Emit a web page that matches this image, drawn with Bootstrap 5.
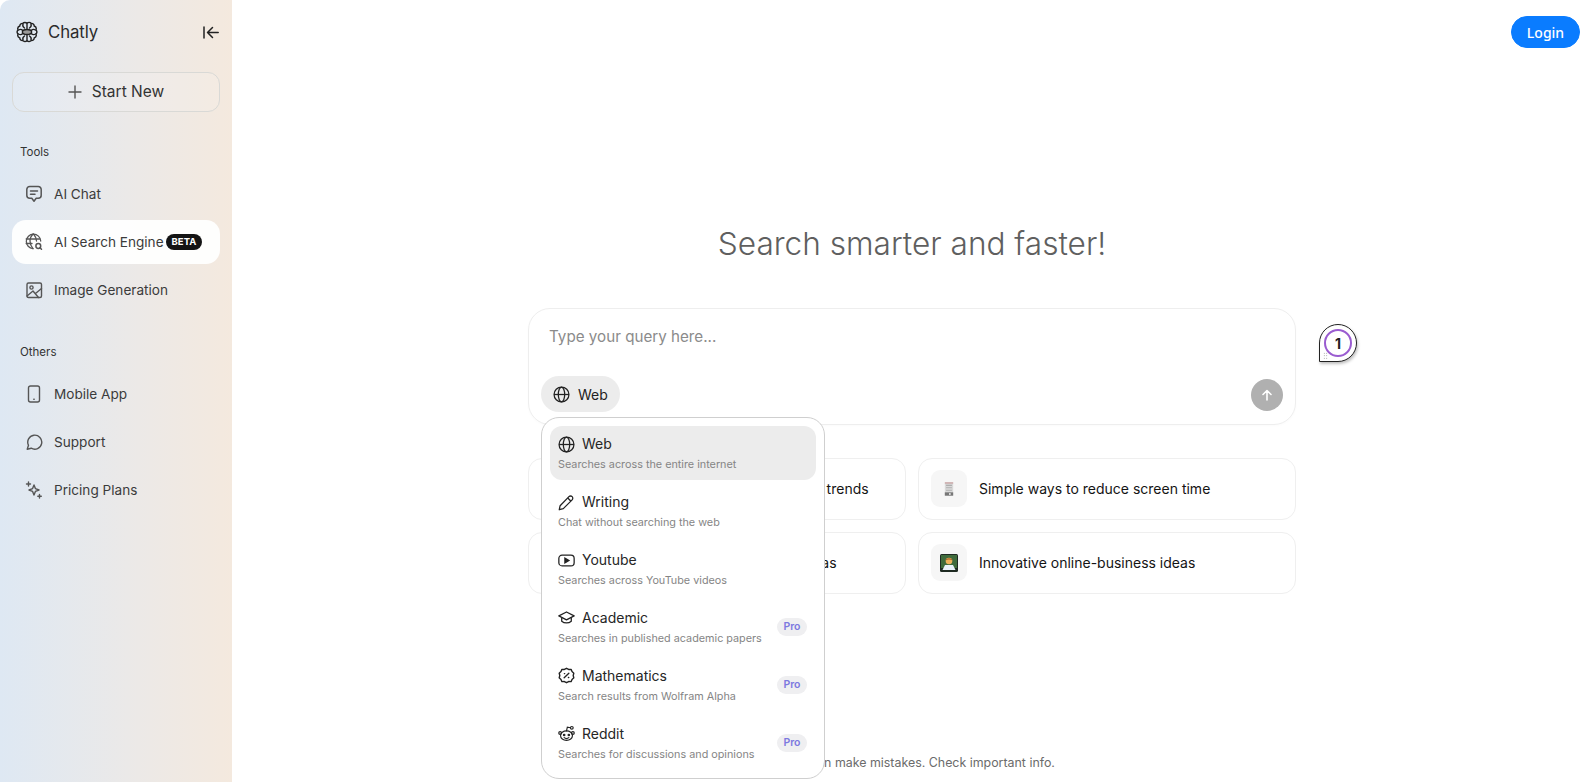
<!DOCTYPE html>
<html lang="en">
<head>
  <meta charset="UTF-8">
  <title>Chatly - AI Search Engine</title>
  <link href="https://cdn.jsdelivr.net/npm/bootstrap@5.3.0/dist/css/bootstrap.min.css" rel="stylesheet">
  <style>
    body {
      font-family: Inter, "Liberation Sans", sans-serif;
      height: 100vh;
      overflow: hidden;
      background: #fff;
      color: #1c1c1c;
    }
    svg { flex-shrink: 0; display: block; }
    .sidebar {
      width: 232px;
      padding: 0 12px;
      background: linear-gradient(90deg, #dee8f3 0%, #ebe9e8 55%, #f4e9de 100%);
      border-top-left-radius: 10px;
    }
    .brand-row { height: 64px; padding: 0 1px 0 4px; margin-bottom: 8px; }
    .brand-group { gap: 10px; }
    .brand { font-size: 16.8px; color: #2b2b2b; letter-spacing: -.1px; padding-top: 1px; }
    .btn-new {
      height: 40px;
      gap: 10px;
      border: 1px solid #d9d9d6;
      border-radius: 12px;
      font-size: 15.5px;
      color: #333;
      background: rgba(255,255,255,.12);
    }
    .side-label { font-size: 11.5px; line-height: 18px; padding-left: 8px; color: #333; }
    .side-label.first { margin: 31px 0 11px; }
    .side-label.next { margin: 27px 0 11px; }
    .sidebar .nav-link {
      height: 44px;
      padding: 0 0 0 13px;
      margin-bottom: 4px;
      border-radius: 14px;
      font-size: 13.6px;
      color: #3b3b3b;
      gap: 11px;
    }
    .sidebar .nav-link.active { background: rgba(255,255,255,.92); color: #3b3b3b; }
    .badge-beta {
      background: #141414;
      font-size: 9.5px;
      font-weight: 700;
      padding: 3.5px 6px;
      margin-left: -6px;
    }
    .btn-login {
      --bs-btn-bg: #0a7cff;
      --bs-btn-hover-bg: #0a7cff;
      --bs-btn-border-color: #0a7cff;
      width: 69px;
      height: 32px;
      padding: 0;
      font-size: 14px;
      font-weight: 500;
      border-radius: 16px;
      font-family: "Noto Sans", sans-serif;
    }
    .top-row { padding: 16px 12px 0 0; }
    .center-col { width: 768px; margin: 176px auto 0; }
    .headline { font-size: 31.6px; line-height: 40px; font-weight: 300; color: #5f5f5f; margin: 0 0 44px; text-align: center; }
    .composer {
      height: 117px;
      border: 1px solid #eeeeee;
      border-radius: 22px;
      padding: 16px 12px 12px 12px;
      box-shadow: 0 1px 3px rgba(0,0,0,.02);
    }
    .composer-hint { font-size: 15.2px; line-height: 24px; color: #8b8b8b; padding-left: 8px; }
    .mode-pill {
      height: 36px;
      padding: 0 12px;
      gap: 8px;
      background: #ececec;
      border-radius: 18px;
      font-size: 14px;
      color: #222;
    }
    .send-btn { width: 32px; height: 32px; padding: 0; background: #b0b0b0; margin-bottom: 1px; }
    .mode-menu {
      display: block;
      left: 12px;
      top: 108px;
      width: 284px;
      height: 362px;
      padding: 8px;
      border: 1px solid #cfcfcf;
      border-radius: 18px;
      z-index: 5;
    }
    .mode-menu .list-group-item {
      height: 54px;
      margin-bottom: 4px;
      padding: 8px;
      border: 0;
      border-radius: 12px;
      background: transparent;
    }
    .mode-menu .list-group-item.active { background: #ececec; }
    .mode-title { font-size: 14px; line-height: 20px; color: #262626; gap: 7px; }
    .mode-desc { font-size: 10.8px; line-height: 16px; color: #858585; margin-top: 3px; white-space: nowrap; }
    .badge-pro {
      background: #efeff1;
      color: #7c79e0;
      font-size: 10.5px;
      font-weight: 600;
      padding: 4px 6.5px;
      margin-right: 1px;
    }
    .suggest-grid { display: grid; grid-template-columns: 378px 378px; gap: 12.5px 12px; margin-top: 33px; }
    .suggest-card {
      height: 61.5px;
      flex-direction: row;
      align-items: center;
      padding: 0 12px;
      gap: 12px;
      border: 1px solid #efefef;
      border-radius: 14px;
      font-size: 14px;
      color: #141414;
      white-space: nowrap;
    }
    .suggest-icon { width: 36px; height: 37px; border-radius: 9px; background: #f6f6f6; }
    .legal { font-size: 12.4px; color: #6b6b6b; padding-bottom: 11px; line-height: 16px; }
    .pin {
      right: -62px;
      top: 15px;
      width: 38px;
      height: 38px;
      background: #fff;
      border: 1px solid #222;
      border-radius: 50% 50% 50% 0;
      box-shadow: 1px 2px 3px rgba(0,0,0,.25);
    }
    .pin-ring {
      width: 28px;
      height: 28px;
      border: 2px solid #9a5cd0;
      border-radius: 50%;
      font-size: 14px;
      font-weight: 700;
      color: #222;
    }
    .pin-grip {
      left: 3px;
      bottom: 2px;
      width: 5px;
      height: 7px;
      background-image: radial-gradient(#888 .6px, transparent .7px);
      background-size: 2.5px 2.5px;
    }
  </style>
</head>
<body class="d-flex">

<!-- Sidebar -->
<aside class="sidebar flex-shrink-0">
  <div class="brand-row d-flex align-items-center justify-content-between">
    <div class="brand-group d-flex align-items-center">
      <svg width="22" height="22" viewBox="0 0 22 22" fill="none" stroke="#222" stroke-width="1.400" stroke-linecap="round">
        <path d="M11 2.200c-1.200-1-3.200-1-4.200.2-1.600-.2-3 1-3 2.600C2.200 5.700 1.400 7.400 2 9c-1.100 1.200-1.100 2.800 0 4-.6 1.600.2 3.300 1.800 4 0 1.600 1.400 2.800 3 2.600 1 1.200 3 1.200 4.200.2 1.200 1 3.200 1 4.200-.2 1.600.2 3-1 3-2.600 1.600-.7 2.400-2.400 1.800-4 1.100-1.200 1.100-2.800 0-4 .6-1.600-.2-3.300-1.800-4 0-1.600-1.400-2.800-3-2.600-1-1.200-3-1.200-4.200-.2z"/>
        <ellipse cx="11" cy="11" rx="4.600" ry="2.500" fill="#9a9a9a"/>
        <path d="M2.500 9c1.500-.8 3-.8 4 .3M19.500 9c-1.500-.8-3-.8-4 .3M2.500 13c1.500.8 3 .8 4-.3M19.500 13c-1.500.8-3 .8-4-.3M7 3c-.5 1.500 0 3 1.500 4M15 3c.5 1.500 0 3-1.500 4M7 19c-.5-1.500 0-3 1.500-4M15 19c.5-1.500 0-3-1.500-4M11 2.500v5.300M11 19.500v-5.300"/>
      </svg>
      <span class="brand">Chatly</span>
    </div>
    <svg width="16" height="13" viewBox="0 0 16 13" fill="none" stroke="#222" stroke-width="1.500" stroke-linecap="round" stroke-linejoin="round">
      <path d="M1 1v11M15.200 6.500H4.500M9.500 1.500l-5 5 5 5"/>
    </svg>
  </div>

  <button class="btn btn-new w-100 d-flex align-items-center justify-content-center">
    <svg width="14" height="14" viewBox="0 0 14 14" fill="none" stroke="#555" stroke-width="1.400" stroke-linecap="round"><path d="M7 1v12M1 7h12"/></svg>
    Start New
  </button>

  <div class="side-label first">Tools</div>
  <nav class="nav flex-column">
    <a class="nav-link d-flex align-items-center" href="#">
      <svg width="18" height="18" viewBox="0 0 18 18" fill="none" stroke="#555" stroke-width="1.500" stroke-linecap="round" stroke-linejoin="round"><path d="M4.800 1.500h8.400a3 3 0 0 1 3 3v5.800a3 3 0 0 1-3 3h-2L9 16.200l-2.200-2.900h-2a3 3 0 0 1-3-3V4.500a3 3 0 0 1 3-3z"/><path d="M5.500 6h7M5.500 9.200h4.500"/></svg>
      AI Chat
    </a>
    <a class="nav-link active d-flex align-items-center" href="#">
      <svg width="18" height="18" viewBox="0 0 18 18" fill="none" stroke="#555" stroke-width="1.300" stroke-linecap="round"><path d="M8 15.600A7.200 7.200 0 1 1 15.700 8"/><path d="M1.200 6h13.600M1.200 10.500H7M8 1c-4 4-4 10 0 14.600M8.500 1c1.800 2 2.800 4.300 3 7"/><circle cx="13.300" cy="13" r="2.400" stroke-width="1.500"/><path d="m15 14.800 1.500 1.500" stroke-width="1.500"/></svg>
      <span class="d-flex align-items-center gap-2 text-nowrap">AI Search Engine <span class="badge rounded-pill badge-beta">BETA</span></span>
    </a>
    <a class="nav-link d-flex align-items-center" href="#">
      <svg width="18" height="18" viewBox="0 0 18 18" fill="none" stroke="#555" stroke-width="1.400" stroke-linecap="round" stroke-linejoin="round"><rect x="2" y="2" width="14.500" height="14.500" rx="1.500"/><circle cx="6.500" cy="6.500" r="1.600"/><path d="m2 15 6-5 5.500 6.500M10.500 12.500l6-5"/></svg>
      Image Generation
    </a>
  </nav>

  <div class="side-label next">Others</div>
  <nav class="nav flex-column">
    <a class="nav-link d-flex align-items-center" href="#">
      <svg width="18" height="18" viewBox="0 0 18 18" fill="none" stroke="#555" stroke-width="1.400" stroke-linecap="round"><rect x="3.500" y="1" width="11" height="16" rx="2"/><path d="M8.800 14.300h.4"/></svg>
      Mobile App
    </a>
    <a class="nav-link d-flex align-items-center" href="#">
      <svg width="18" height="18" viewBox="0 0 18 18" fill="none" stroke="#555" stroke-width="1.400" stroke-linecap="round" stroke-linejoin="round"><path d="M2.200 16.200 3.500 12.300A7 7 0 1 1 6.200 15.200z"/></svg>
      Support
    </a>
    <a class="nav-link d-flex align-items-center" href="#">
      <svg width="18" height="18" viewBox="0 0 18 18" fill="none" stroke="#555" stroke-width="1.400" stroke-linecap="round" stroke-linejoin="round"><path d="m9 4 1.400 3.600L14 9l-3.600 1.400L9 14l-1.400-3.600L4 9l3.600-1.400z"/><path d="M3.500 1v4M1.500 3h4M14.500 13.500v3.500M12.800 15.200h3.500"/></svg>
      Pricing Plans
    </a>
  </nav>
</aside>

<!-- Main Content -->
<main class="flex-grow-1 d-flex flex-column">
  <div class="top-row d-flex justify-content-end">
    <button class="btn btn-primary btn-login">Login</button>
  </div>

  <div class="center-col">
    <h1 class="headline">Search smarter and faster!</h1>

    <div class="composer position-relative d-flex flex-column justify-content-between">
      <div class="composer-hint">Type your query here...</div>
      <div class="d-flex align-items-end justify-content-between">
        <div class="mode-pill d-flex align-items-center">
          <svg width="17" height="17" viewBox="0 0 16 16" fill="none" stroke="#222" stroke-width="1.200"><circle cx="8" cy="8" r="7"/><ellipse cx="8" cy="8" rx="3" ry="7"/><path d="M1 8h14"/></svg>
          Web
        </div>
        <button class="btn send-btn rounded-circle d-flex align-items-center justify-content-center">
          <svg width="12" height="12" viewBox="0 0 12 12" fill="none" stroke="#fff" stroke-width="1.600" stroke-linecap="round" stroke-linejoin="round"><path d="M6 11V1.500M2 5.500l4-4 4 4"/></svg>
        </button>
      </div>

      <!-- Mode menu -->
      <div class="dropdown-menu show mode-menu">
        <div class="list-group">
          <div class="list-group-item active">
            <div class="mode-title d-flex align-items-center">
              <svg width="17" height="17" viewBox="0 0 16 16" fill="none" stroke="#222" stroke-width="1.200"><circle cx="8" cy="8" r="7"/><ellipse cx="8" cy="8" rx="3" ry="7"/><path d="M1 8h14"/></svg>
              Web
            </div>
            <div class="mode-desc">Searches across the entire internet</div>
          </div>
          <div class="list-group-item">
            <div class="mode-title d-flex align-items-center">
              <svg width="17" height="17" viewBox="0 0 16 16" fill="none" stroke="#222" stroke-width="1.200" stroke-linejoin="round"><path d="M1.200 14.800 2 11l8.300-8.500a2 2 0 0 1 3 3L5 13.800z"/><path d="m9.200 3.800 3 3"/></svg>
              Writing
            </div>
            <div class="mode-desc">Chat without searching the web</div>
          </div>
          <div class="list-group-item">
            <div class="mode-title d-flex align-items-center">
              <svg width="17" height="17" viewBox="0 0 16 16" fill="none" stroke="#222" stroke-width="1.200"><rect x=".8" y="3" width="14.400" height="10" rx="3"/><path d="M6.500 5.700v4.600L10.300 8z" fill="#222"/></svg>
              Youtube
            </div>
            <div class="mode-desc">Searches across YouTube videos</div>
          </div>
          <div class="list-group-item d-flex align-items-center justify-content-between">
            <div>
              <div class="mode-title d-flex align-items-center">
                <svg width="17" height="17" viewBox="0 0 16 16" fill="none" stroke="#222" stroke-width="1.200" stroke-linejoin="round"><path d="M8 2.800.8 6.500 8 10.200l7.200-3.700z"/><path d="M3.500 8v3.500c2.500 2.200 6.500 2.200 9 0V8"/></svg>
                Academic
              </div>
              <div class="mode-desc">Searches in published academic papers</div>
            </div>
            <span class="badge rounded-pill badge-pro">Pro</span>
          </div>
          <div class="list-group-item d-flex align-items-center justify-content-between">
            <div>
              <div class="mode-title d-flex align-items-center">
                <svg width="17" height="17" viewBox="0 0 16 16" fill="none" stroke="#222" stroke-width="1.300" stroke-linecap="round" stroke-linejoin="round"><path d="M8 1.200 10 2.300l2.300-.1.900 2.100 1.700 1.500-.6 2.200.6 2.200-1.700 1.500-.9 2.100-2.300-.1L8 14.800 6 13.700l-2.300.1-.9-2.100-1.700-1.500.6-2.200-.6-2.200 1.700-1.500.9-2.100 2.300.1z"/><path d="m5.800 10.200 4.400-4.400M6 6.200h.3M9.800 9.900h.3"/></svg>
                Mathematics
              </div>
              <div class="mode-desc">Search results from Wolfram Alpha</div>
            </div>
            <span class="badge rounded-pill badge-pro">Pro</span>
          </div>
          <div class="list-group-item d-flex align-items-center justify-content-between">
            <div>
              <div class="mode-title d-flex align-items-center">
                <svg width="17" height="17" viewBox="0 0 16 16" fill="none" stroke="#222" stroke-width="1.100" stroke-linecap="round"><ellipse cx="8" cy="10" rx="5.600" ry="4.400"/><circle cx="13" cy="2.700" r="1.300"/><path d="M8 5.500 8.800 2l3 .6"/><circle cx="2" cy="7.600" r="1.300"/><circle cx="14" cy="7.600" r="1.300"/><circle cx="5.800" cy="9.400" r=".7" fill="#222"/><circle cx="10.200" cy="9.400" r=".7" fill="#222"/><path d="M5.800 11.900c1.300 1 3.100 1 4.400 0"/></svg>
                Reddit
              </div>
              <div class="mode-desc">Searches for discussions and opinions</div>
            </div>
            <span class="badge rounded-pill badge-pro">Pro</span>
          </div>
        </div>
      </div>

      <!-- Numbered pin -->
      <div class="pin position-absolute d-flex align-items-center justify-content-center">
        <div class="pin-ring d-flex align-items-center justify-content-center">1</div>
        <span class="pin-grip position-absolute"></span>
      </div>
    </div>

    <div class="suggest-grid">
      <div class="card suggest-card">
        <span class="suggest-icon"></span>
        <span>Upcoming global digital technology trends</span>
      </div>
      <div class="card suggest-card">
        <span class="suggest-icon d-flex align-items-center justify-content-center">
          <svg width="10" height="14" viewBox="0 0 12 16"><rect x="1" y="0" width="10" height="16" fill="#d9d9d9"/><rect x="1" y="0" width="10" height="1.500" fill="#c9a0a0"/><rect x="2.500" y="3" width="7" height="1" fill="#999"/><rect x="2.500" y="6" width="7" height="1" fill="#aaa"/><rect x="2.500" y="9" width="7" height="1" fill="#aaa"/><rect x="1" y="12" width="10" height="4" fill="#777"/><rect x="6" y="13" width="2" height="2" fill="#eee"/></svg>
        </span>
        <span>Simple ways to reduce screen time</span>
      </div>
      <div class="card suggest-card">
        <span class="suggest-icon"></span>
        <span>Fun &amp; creative weekend project ideas</span>
      </div>
      <div class="card suggest-card">
        <span class="suggest-icon d-flex align-items-center justify-content-center">
          <svg width="18" height="18" viewBox="0 0 18 18"><rect width="18" height="18" rx="1.500" fill="#1e2a22"/><rect x="1" y="1" width="16" height="13" fill="#3f6b3c"/><circle cx="9" cy="7" r="3.300" fill="#eeb25c"/><path d="M5.500 6.500c0-3 7-3 7 0-2-1.300-5-1.300-7 0z" fill="#a8622a"/><path d="M2.500 16 5 11h8l2.500 5z" fill="#e9f2fa"/></svg>
        </span>
        <span>Innovative online-business ideas</span>
      </div>
    </div>
  </div>

  <div class="legal mt-auto text-center">Chatly can make mistakes. Check important info.</div>
</main>

</body>
</html>
